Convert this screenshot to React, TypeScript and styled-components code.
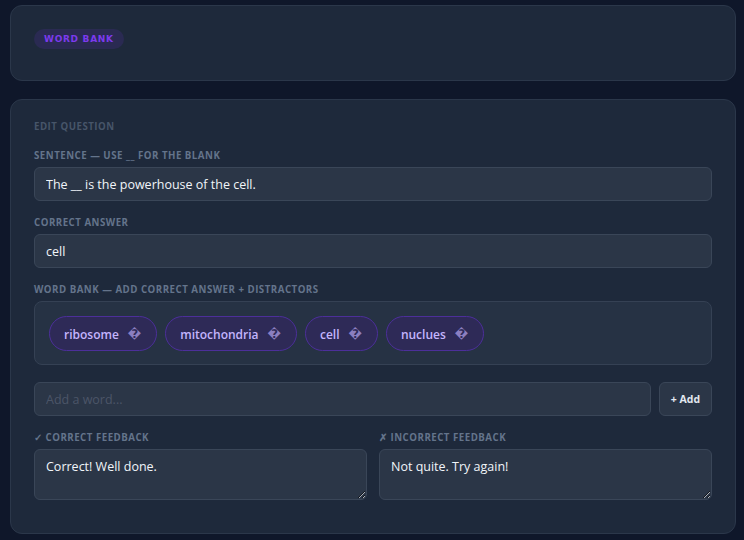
import React from "react";
import styled, { createGlobalStyle } from "styled-components";

const Global = createGlobalStyle`
  html, body { margin: 0; padding: 0; background: #0f172a; }
  body { font-family: "Open Sans", "Noto Sans", sans-serif; color: #e2e8f0; }
  * { box-sizing: border-box; }
`;

const Page = styled.div`
  padding: 5px 8px 8px 10px;
  display: flex;
  flex-direction: column;
  gap: 18px;
  width: 744px;
`;

const Card = styled.section<{ $tall?: boolean }>`
  background: #1e293b;
  border: 1px solid #2b374a;
  border-radius: 12px;
  padding: ${(p) => (p.$tall ? "19px 23px 33px" : "23px 23px 31px")};
  display: flex;
  flex-direction: column;
`;

const Badge = styled.span`
  align-self: flex-start;
  font-family: "DejaVu Sans", sans-serif;
  font-weight: 700;
  font-size: 9px;
  letter-spacing: 0.7px;
  color: #7c3aed;
  background: #2a2a52;
  border-radius: 10px;
  padding: 0 10px;
  height: 20px;
  line-height: 20px;
`;

const Label = styled.div<{ $muted?: boolean }>`
  font-size: 9.7px;
  font-weight: 700;
  letter-spacing: 0.5px;
  text-transform: uppercase;
  color: ${(p) => (p.$muted ? "#475569" : "#64748b")};
  line-height: 16px;
  margin-bottom: 3px;
`;

const Field = styled.div<{ $gap?: number }>`
  display: flex;
  flex-direction: column;
  margin-top: ${(p) => p.$gap ?? 0}px;
`;

const Input = styled.input`
  height: 34px;
  background: #2b3647;
  border: 1px solid #3a4658;
  border-radius: 6px;
  padding: 0 11px;
  color: #f1f5f9;
  font-family: inherit;
  font-size: 12.5px;
  outline: none;
  width: 100%;
  &::placeholder { color: #4b5567; }
`;

const Bank = styled.div`
  background: #263244;
  border: 1px solid #354154;
  border-radius: 8px;
  padding: 14px 14px;
  display: flex;
  flex-wrap: wrap;
  gap: 8px;
  height: 64px;
`;

const Chip = styled.div`
  display: inline-flex;
  align-items: center;
  gap: 9px;
  height: 35px;
  padding: 1px 15px 0 14px;
  background: #2e2a57;
  border: 1px solid #4c2f9a;
  border-radius: 18px;
  color: #c4b5fd;
  font-size: 12px;
  font-weight: 600;
`;

const ChipX = styled.span`
  color: #8b7fc0;
  font-family: "DejaVu Sans", sans-serif;
  font-size: 12px;
  line-height: 1;
`;

const AddRow = styled.div`
  display: flex;
  gap: 8px;
  margin-top: 17px;
`;

const AddButton = styled.button`
  width: 53px;
  height: 34px;
  flex: none;
  background: #2b3647;
  border: 1px solid #3a4658;
  border-radius: 6px;
  color: #e2e8f0;
  font-family: inherit;
  font-size: 10.5px;
  font-weight: 700;
`;

const Grid = styled.div`
  display: grid;
  grid-template-columns: 1fr 1fr;
  gap: 12px;
  margin-top: 14px;
`;

const TextArea = styled.textarea`
  height: 51px;
  background: #2b3647;
  border: 1px solid #3a4658;
  border-radius: 6px;
  padding: 8px 11px;
  color: #f1f5f9;
  font-family: inherit;
  font-size: 12.5px;
  resize: vertical;
  outline: none;
  width: 100%;
  display: block;
`;

const words = ["ribosome", "mitochondria", "cell", "nuclues"];

export default function App() {
  return (
    <>
      <Global />
      <Page>
        <Card>
          <Badge>WORD BANK</Badge>
        </Card>
        <Card $tall>
          <Label $muted>Edit Question</Label>
          <Field $gap={10}>
            <Label>Sentence — use __ for the blank</Label>
            <Input defaultValue="The __ is the powerhouse of the cell." />
          </Field>
          <Field $gap={14}>
            <Label>Correct Answer</Label>
            <Input defaultValue="cell" />
          </Field>
          <Field $gap={14}>
            <Label>Word Bank — add correct answer + distractors</Label>
            <Bank>
              {words.map((w) => (
                <Chip key={w}>
                  {w}
                  <ChipX>{"\uFFFD"}</ChipX>
                </Chip>
              ))}
            </Bank>
          </Field>
          <AddRow>
            <Input placeholder="Add a word..." />
            <AddButton>+ Add</AddButton>
          </AddRow>
          <Grid>
            <Field>
              <Label>✓ Correct Feedback</Label>
              <TextArea defaultValue="Correct! Well done." />
            </Field>
            <Field>
              <Label>✗ Incorrect Feedback</Label>
              <TextArea defaultValue="Not quite. Try again!" />
            </Field>
          </Grid>
        </Card>
      </Page>
    </>
  );
}
